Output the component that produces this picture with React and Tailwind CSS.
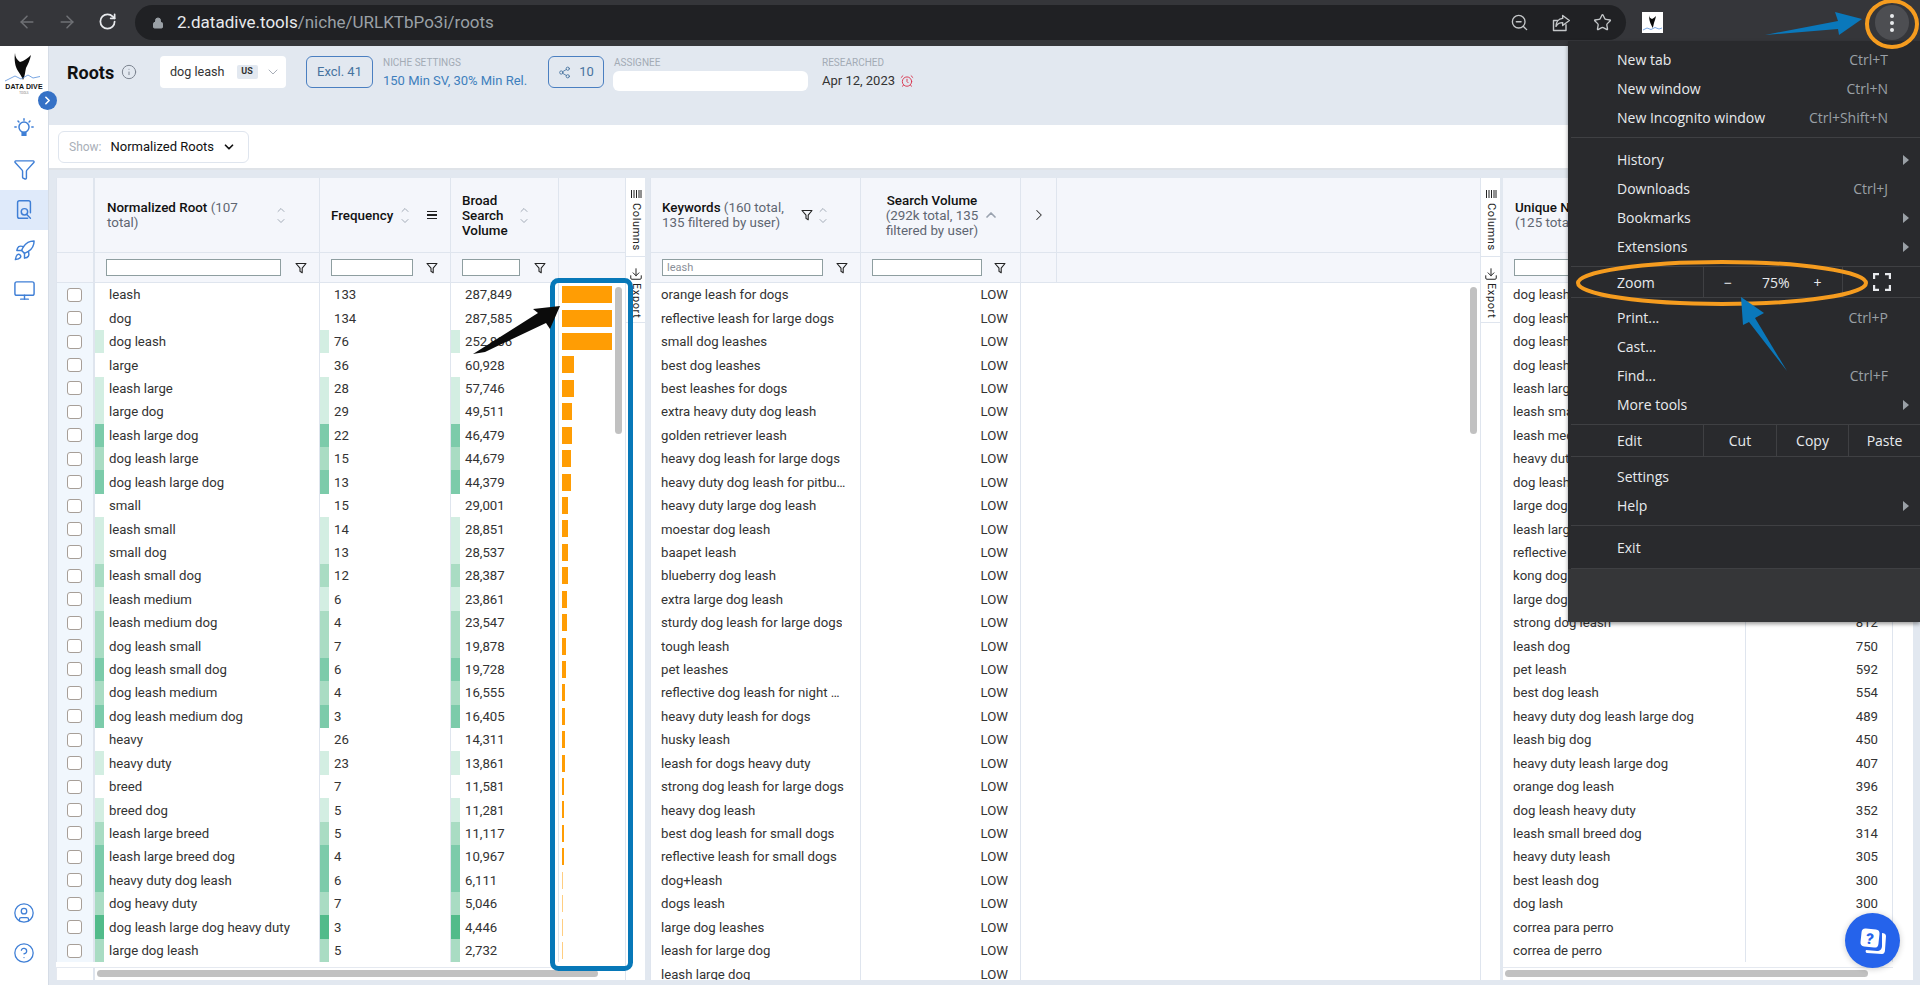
import React from "react";
import { ArrowLeft, ArrowRight, RotateCw, Lock, ZoomOut, Star, ChevronRight, ChevronDown, ChevronUp, Info, Share2, AlarmClock, Filter, Rocket, Monitor, CircleUser, CircleHelp, Download } from "lucide-react";

const roots = [
  ["leash", 133, "287,849", 0, 50], ["dog", 134, "287,585", 0, 50], ["dog leash", 76, "252,806", 1, 50],
  ["large", 36, "60,928", 0, 12], ["leash large", 28, "57,746", 1, 11.5], ["large dog", 29, "49,511", 1, 10],
  ["leash large dog", 22, "46,479", 3, 9.5], ["dog leash large", 15, "44,679", 2, 9], ["dog leash large dog", 13, "44,379", 3, 9],
  ["small", 15, "29,001", 0, 5.8], ["leash small", 14, "28,851", 1, 5.8], ["small dog", 13, "28,537", 1, 5.7],
  ["leash small dog", 12, "28,387", 2, 5.7], ["leash medium", 6, "23,861", 1, 4.8], ["leash medium dog", 4, "23,547", 2, 4.7],
  ["dog leash small", 7, "19,878", 2, 4], ["dog leash small dog", 6, "19,728", 3, 4], ["dog leash medium", 4, "16,555", 2, 3.3],
  ["dog leash medium dog", 3, "16,405", 3, 3.3], ["heavy", 26, "14,311", 0, 2.9], ["heavy duty", 23, "13,861", 1, 2.8],
  ["breed", 7, "11,581", 0, 2.3], ["breed dog", 5, "11,281", 1, 2.3], ["leash large breed", 5, "11,117", 2, 2.2],
  ["leash large breed dog", 4, "10,967", 3, 2.2], ["heavy duty dog leash", 6, "6,111", 3, 1.2], ["dog heavy duty", 7, "5,046", 2, 1],
  ["dog leash large dog heavy duty", 3, "4,446", 4, 0.9], ["large dog leash", 5, "2,732", 2, 0.6],
];
const levels = ["#ffffff", "#d3eee2", "#a9dcc3", "#7ccbaa", "#52bb8a"];

const keywords = ["orange leash for dogs","reflective leash for large dogs","small dog leashes","best dog leashes","best leashes for dogs","extra heavy duty dog leash","golden retriever leash","heavy dog leash for large dogs","heavy duty dog leash for pitbulls","heavy duty large dog leash","moestar dog leash","baapet leash","blueberry dog leash","extra large dog leash","sturdy dog leash for large dogs","tough leash","pet leashes","reflective dog leash for night walking","heavy duty leash for dogs","husky leash","leash for dogs heavy duty","strong dog leash for large dogs","heavy dog leash","best dog leash for small dogs","reflective leash for small dogs","dog+leash","dogs leash","large dog leashes","leash for large dog","leash large dog"];

const uniques = [["dog leash","40,500"],["dog leash for large dogs","9,900"],["dog leash small dog","5,400"],["dog leash large","4,400"],["leash large dog","3,600"],["leash small dog","2,900"],["leash medium dog","2,400"],["heavy duty dog leash","1,900"],["dog leash large dog","1,600"],["large dog leash","1,300"],["leash large breed","1,100"],["reflective dog leash","1,000"],["kong dog leash","950"],["large dog leash","900"],["strong dog leash","812"],["leash dog","750"],["pet leash","592"],["best dog leash","554"],["heavy duty dog leash large dog","489"],["leash big dog","450"],["heavy duty leash large dog","407"],["orange dog leash","396"],["dog leash heavy duty","352"],["leash small breed dog","314"],["heavy duty leash","305"],["best leash dog","300"],["dog lash","300"],["correa para perro","290"],["correa de perro","260"]];

const Funnel = ({ className = "" }) => (
  <svg viewBox="0 0 12 12" className={"w-[12px] h-[12px] " + className} fill="none" stroke="#222" strokeWidth="1.1">
    <path d="M1 1.5h10L7.2 6.2v4.6L5 9.4V6.2z" strokeLinejoin="round" />
  </svg>
);

const Sort = ({ className = "" }) => (
  <span className={"flex flex-col items-center text-[#9aa3af] " + className}>
    <ChevronUp size={12} strokeWidth={1.8} className="-mb-[1px]" />
    <ChevronDown size={12} strokeWidth={1.8} />
  </span>
);

const FilterBox = ({ w, value }) => (
  <div className={"h-[17px] bg-white border border-[#8e9ea0] flex items-center pl-[4px] text-[11px] text-[#8a8f98] " + w}>{value}</div>
);

const Rail = () => (
  <div className="w-[20px] shrink-0 flex flex-col bg-white border-l border-[#dfe5ee]">
    <div className="h-[79px] border-b border-[#dfe5ee] flex flex-col items-center pt-[11px] gap-[4px]">
      <svg viewBox="0 0 12 10" className="w-[12px] h-[10px]" stroke="#222" strokeWidth="1"><path d="M1.5 1v8M4 1v8M6.5 1v8M9 1v8M11 1v8" /></svg>
      <span className="[writing-mode:vertical-rl] text-[11px] leading-[20px] text-[#222] tracking-[0.6px]">Columns</span>
    </div>
    <div className="h-[66px] border-b border-[#dfe5ee] flex flex-col items-center pt-[10px] gap-[2px]">
      <Download size={14} strokeWidth={1.7} className="text-[#222]" />
      <span className="[writing-mode:vertical-rl] text-[11px] leading-[20px] text-[#222] tracking-[0.6px]">Export</span>
    </div>
  </div>
);

const HeadCell = ({ w, children, className = "" }) => (
  <div className={"h-full shrink-0 border-r border-[#dfe5ee] flex items-center text-[13.4px] leading-[15px] " + w + " " + className}>{children}</div>
);

const Scroll = ({ className }) => <div className={"absolute rounded-full bg-[#c1c1c1] " + className}></div>;

function RootsTable() {
  return (
    <div className="relative w-[589px] shrink-0 flex bg-white">
      <div className="w-[569px] flex flex-col">
        <div className="h-[75px] flex bg-[#f4f6fb] border-b border-[#dfe5ee] border-l">
          <HeadCell w="w-[38px] border-r-2"></HeadCell>
          <HeadCell w="w-[225px]" className="pl-[12px]">
            <div className="w-[140px] font-medium text-[#111]">Normalized Root <span className="text-[#5f6672] font-normal">(107 total)</span></div>
            <Sort className="ml-[28px]" />
          </HeadCell>
          <HeadCell w="w-[131px]" className="pl-[11px]">
            <span className="font-medium text-[#111]">Frequency</span>
            <Sort className="ml-[6px]" />
            <div className="ml-[16px] flex flex-col gap-[2px]"><i className="block w-[10px] h-[1.5px] bg-[#222]"></i><i className="block w-[10px] h-[1.5px] bg-[#222]"></i><i className="block w-[10px] h-[1.5px] bg-[#222]"></i></div>
          </HeadCell>
          <HeadCell w="w-[108px]" className="pl-[11px]">
            <div className="w-[50px] font-medium text-[#111]">Broad Search Volume</div>
            <Sort className="ml-[6px]" />
          </HeadCell>
          <div className="flex-1"></div>
        </div>
        <div className="h-[30px] flex bg-[#f4f6fb] border-b border-[#dfe5ee] border-l">
          <HeadCell w="w-[38px] border-r-2"></HeadCell>
          <HeadCell w="w-[225px]" className="pl-[11px] gap-[14px]"><FilterBox w="w-[175px]" /><Funnel /></HeadCell>
          <HeadCell w="w-[131px]" className="pl-[11px] gap-[13px]"><FilterBox w="w-[82px]" /><Funnel /></HeadCell>
          <HeadCell w="w-[108px]" className="pl-[11px] gap-[14px]"><FilterBox w="w-[58px]" /><Funnel /></HeadCell>
          <div className="flex-1"></div>
        </div>
        <div className="h-[684px] overflow-hidden">
          {roots.map(([n, f, v, l, b], i) => (
            <div key={i} className="h-[23.43px] flex text-[13.2px] text-[#333] border-l border-[#dfe5ee]">
              <div className="w-[38px] shrink-0 bg-[#f1f7fd] border-r-2 border-[#dfe5ee] flex items-center pl-[10px]">
                <span className="block w-[15px] h-[14px] bg-white border border-[#a79f98] rounded-[3px]"></span>
              </div>
              <div className="w-[225px] shrink-0 flex items-center border-r border-[#dfe5ee]">
                <span className="w-[9px] h-full shrink-0" style={{ background: levels[l] }}></span>
                <span className="pl-[5px] pt-[1px]">{n}</span>
              </div>
              <div className="w-[131px] shrink-0 flex items-center border-r border-[#dfe5ee]">
                <span className="w-[9px] h-full shrink-0" style={{ background: levels[l] }}></span>
                <span className="pl-[5px] pt-[1px]">{f}</span>
              </div>
              <div className="w-[108px] shrink-0 flex items-center border-r border-[#dfe5ee]">
                <span className="w-[9px] h-full shrink-0" style={{ background: levels[l] }}></span>
                <span className="pl-[5px] pt-[1px]">{v}</span>
              </div>
              <div className="flex-1 flex items-center pl-[3px]">
                <span className="block h-[17px] bg-[#ff9d04]" style={{ width: b + "px", opacity: b < 2 ? 0.5 : 1 }}></span>
              </div>
            </div>
          ))}
        </div>
        <div className="flex-1 border-t border-[#e5e9f0] flex border-l">
          <div className="w-[38px] border-r-2 border-[#dfe5ee]"></div>
        </div>
      </div>
      <Rail />
      <Scroll className="left-[559px] top-[109px] w-[7px] h-[147px]" />
      <Scroll className="left-[41px] top-[792px] w-[501px] h-[7px]" />
    </div>
  );
}

function KeywordsTable() {
  return (
    <div className="relative w-[850px] shrink-0 flex bg-white">
      <div className="w-[830px] flex flex-col">
        <div className="h-[75px] flex bg-[#f4f6fb] border-b border-[#dfe5ee] border-l">
          <HeadCell w="w-[210px]" className="pl-[11px]">
            <div className="w-[137px] font-medium text-[#111]">Keywords <span className="text-[#5f6672] font-normal">(160 total, 135 filtered by user)</span></div>
            <Funnel className="ml-[2px]" />
            <Sort className="ml-[4px]" />
          </HeadCell>
          <HeadCell w="w-[160px]" className="pl-[18px]">
            <div className="w-[106px] text-center text-[#5f6672]"><span className="font-medium text-[#111] whitespace-nowrap">Search Volume</span> (292k total, 135 filtered by user)</div>
            <ChevronUp size={16} strokeWidth={2.6} className="-ml-[2px] text-[#9aa3af]" />
          </HeadCell>
          <HeadCell w="w-[36px]" className="pl-[9px]"><ChevronRight size={18} strokeWidth={1.4} className="text-[#333]" /></HeadCell>
          <div className="flex-1"></div>
        </div>
        <div className="h-[30px] flex bg-[#f4f6fb] border-b border-[#dfe5ee] border-l">
          <HeadCell w="w-[210px]" className="pl-[11px] gap-[13px]"><FilterBox w="w-[161px]" value="leash" /><Funnel /></HeadCell>
          <HeadCell w="w-[160px]" className="pl-[11px] gap-[12px]"><FilterBox w="w-[110px]" /><Funnel /></HeadCell>
          <HeadCell w="w-[36px]"></HeadCell>
          <div className="flex-1"></div>
        </div>
        <div className="flex-1 overflow-hidden">
          {keywords.map((k, i) => (
            <div key={i} className="h-[23.43px] flex text-[13.2px] text-[#333] border-l border-[#dfe5ee]">
              <div className="w-[210px] shrink-0 flex items-center pl-[10px] pr-[13px] pt-[1px] border-r border-[#dfe5ee]"><span className="truncate">{k}</span></div>
              <div className="w-[160px] shrink-0 flex items-center justify-end pr-[12px] pt-[1px] border-r border-[#dfe5ee]">LOW</div>
            </div>
          ))}
        </div>
      </div>
      <Rail />
      <Scroll className="left-[820px] top-[109px] w-[7px] h-[147px]" />
    </div>
  );
}

function UniqueTable() {
  return (
    <div className="relative w-[410px] shrink-0 flex bg-white">
      <div className="w-[390px] flex flex-col">
        <div className="h-[75px] flex bg-[#f4f6fb] border-b border-[#dfe5ee]">
          <HeadCell w="w-[243px]" className="pl-[12px]">
            <div className="font-medium text-[#111]">Unique Normalized Keywords <br /><span className="text-[#5f6672] font-normal">(125 total)</span></div>
          </HeadCell>
          <HeadCell w="w-[147px]"></HeadCell>
        </div>
        <div className="h-[30px] flex bg-[#f4f6fb] border-b border-[#dfe5ee]">
          <HeadCell w="w-[243px]" className="pl-[11px]"><FilterBox w="w-[190px]" /></HeadCell>
          <HeadCell w="w-[147px]"></HeadCell>
        </div>
        <div className="h-[684px] overflow-hidden">
          {uniques.map(([n, v], i) => (
            <div key={i} className="h-[23.43px] flex text-[13.2px] text-[#333]">
              <div className="w-[243px] shrink-0 flex items-center pl-[10px] pt-[1px] border-r border-[#dfe5ee]">{n}</div>
              <div className="w-[147px] shrink-0 flex items-center justify-end pr-[14px] pt-[1px] border-r border-[#dfe5ee]">{v}</div>
            </div>
          ))}
        </div>
        <div className="flex-1 border-t border-[#e5e9f0]"></div>
      </div>
      <div className="w-[20px] shrink-0 bg-white"></div>
      <Scroll className="left-[2px] top-[792px] w-[363px] h-[7px]" />
    </div>
  );
}

const Tri = () => <span className="w-0 h-0 border-y-[5px] border-y-transparent border-l-[6px] border-l-[#9aa0a6]"></span>;

const MenuRow = ({ label, hint, arrow }) => (
  <div className="h-[29px] flex items-center pl-[49px] pr-[32px] pb-[1.5px] relative">
    <span className="text-[#e8eaed]">{label}</span>
    {hint && <span className="ml-auto text-[#9aa0a6]">{hint}</span>}
    {arrow && <span className="absolute right-[11px] top-[9px] flex"><Tri /></span>}
  </div>
);
const Sep = () => <div className="h-px bg-[#3f4043] ml-[3px]"></div>;

function ChromeMenu() {
  return (
    <div className="absolute left-[1568px] top-[41px] w-[352px] h-[581px] bg-[#292a2d] flex flex-col text-[14px] font-['Open_Sans',sans-serif] shadow-[0_2px_4px_rgba(0,0,0,0.4)]">
      <div className="h-[4.5px]"></div>
      <MenuRow label="New tab" hint="Ctrl+T" />
      <MenuRow label="New window" hint="Ctrl+N" />
      <MenuRow label="New Incognito window" hint="Ctrl+Shift+N" />
      <div className="h-[4px]"></div>
      <Sep />
      <div className="h-[8px]"></div>
      <MenuRow label="History" arrow />
      <MenuRow label="Downloads" hint="Ctrl+J" />
      <MenuRow label="Bookmarks" arrow />
      <MenuRow label="Extensions" arrow />
      <div className="h-[4.5px]"></div>
      <Sep />
      <div className="h-[30px] flex items-center text-[#e8eaed]">
        <span className="w-[135px] pl-[49px]">Zoom</span>
        <div className="w-[140px] h-full border-x border-[#3f4043] flex items-center relative">
          <span className="ml-[20px]">−</span>
          <span className="ml-[30px]">75%</span>
          <span className="ml-[24px]">+</span>
        </div>
        <svg viewBox="0 0 18 18" className="w-[18px] h-[18px] ml-[30px]" fill="none" stroke="#e8eaed" strokeWidth="2.4"><path d="M1 6V1h5M12 1h5v5M17 12v5h-5M6 17H1v-5" /></svg>
      </div>
      <Sep />
      <div className="h-[6px]"></div>
      <MenuRow label="Print..." hint="Ctrl+P" />
      <MenuRow label="Cast..." />
      <MenuRow label="Find..." hint="Ctrl+F" />
      <MenuRow label="More tools" arrow />
      <div className="h-[4px]"></div>
      <Sep />
      <div className="h-[31px] flex items-center text-[#e8eaed]">
        <span className="w-[135px] pl-[49px]">Edit</span>
        <span className="w-[73px] h-full border-l border-[#3f4043] flex items-center justify-center">Cut</span>
        <span className="w-[72px] h-full border-l border-[#3f4043] flex items-center justify-center">Copy</span>
        <span className="w-[72px] h-full border-l border-[#3f4043] flex items-center justify-center">Paste</span>
      </div>
      <Sep />
      <div className="h-[6px]"></div>
      <MenuRow label="Settings" />
      <MenuRow label="Help" arrow />
      <div className="h-[4px]"></div>
      <Sep />
      <div className="h-[8px]"></div>
      <MenuRow label="Exit" />
      <div className="h-[5px]"></div>
      <Sep />
      <div className="flex-1 bg-[#353638]"></div>
    </div>
  );
}

function Sidebar() {
  const c = "text-[#3f7fd6]";
  return (
    <div className="relative w-[49px] shrink-0 bg-white border-r border-[#d5dce6] flex flex-col items-center">
      <div className="h-[50px] w-full relative flex flex-col items-center pt-[4px]">
        <svg viewBox="0 0 48 36" className="w-[48px] h-[36px]">
          <path d="M15 3c0 4 2 7 5 9 4-1 8-4 11-7-1 5-3 9-5 13-1 4-1 8-3 12-1-3-3-6-5-9-3-4-4-12-3-18z" fill="#0b0b0b" />
          <path d="M5 31l10-5 6 3 7-4 5 3 7-1.500" fill="none" stroke="#3f7fd6" strokeWidth="0.7" />
        </svg>
        <span className="-mt-[3px] text-[7px] leading-[8px] font-bold text-[#111] font-['Liberation_Sans',sans-serif] tracking-[0.1px]">DATA DIVE</span>
        <span className="text-[3px] leading-[4px] text-[#777]">TOOLS</span>
      </div>
      <div className="absolute left-[38px] top-[45px] w-[19px] h-[19px] rounded-full bg-[#3571c6] flex items-center justify-center z-10">
        <ChevronRight size={13} strokeWidth={3} className="text-white" />
      </div>
      <div className="h-[63px] w-full flex items-center justify-center">
        <svg viewBox="0 0 24 24" className={"w-[22px] h-[22px] " + c} fill="none" stroke="currentColor" strokeWidth="1.6" strokeLinecap="round">
          <circle cx="12" cy="11" r="5.5" /><path d="M10 17h4v3h-4z" fill="currentColor" /><path d="M12 2v1.5M3.5 11H2M22 11h-1.500M5.500 4.500l1 1M18.500 4.500l-1 1" />
        </svg>
      </div>
      <div className="h-[20px] w-full flex items-center justify-center">
        <Filter size={23} strokeWidth={1.5} className={c} />
      </div>
      <div className="h-[40px] mt-[11px] w-full bg-[#dfeafa] flex items-center justify-center">
        <svg viewBox="0 0 24 24" className={"w-[22px] h-[24px] " + c} fill="none" stroke="currentColor" strokeWidth="1.6" strokeLinecap="round">
          <path d="M16 21H7a2 2 0 0 1-2-2V4a2 2 0 0 1 2-2h10a2 2 0 0 1 2 2v11" /><circle cx="12.5" cy="14" r="3.5" /><path d="M15 17l4 4" />
        </svg>
      </div>
      <div className="h-[40px] w-full flex items-center justify-center">
        <Rocket size={23} strokeWidth={1.5} className={c} />
      </div>
      <div className="h-[40px] w-full flex items-center justify-center">
        <Monitor size={23} strokeWidth={1.5} className={c} />
      </div>
      <div className="mt-auto mb-[21px] flex flex-col gap-[18px]">
        <CircleUser size={22} strokeWidth={1.4} className={c} />
        <CircleHelp size={22} strokeWidth={1.4} className={c} />
      </div>
    </div>
  );
}

function ChromeBar() {
  return (
    <div className="h-[46px] bg-[#35363a] flex items-start shrink-0 relative">
      <ArrowLeft size={20} strokeWidth={1.8} className="absolute left-[17px] top-[12px] text-[#6f7175]" />
      <ArrowRight size={20} strokeWidth={1.8} className="absolute left-[57px] top-[12px] text-[#6f7175]" />
      <RotateCw size={19} strokeWidth={2.2} className="absolute left-[98px] top-[12px] text-[#e8eaed]" />
      <div className="ml-[135px] mt-[5px] w-[1491px] h-[35px] rounded-full bg-[#202124] flex items-center pl-[17px]">
        <Lock size={12} fill="#9aa0a6" strokeWidth={2} className="text-[#9aa0a6]" />
        <span className="ml-[13px] text-[17px] font-['Roboto',sans-serif] text-[#e8eaed]">2.datadive.tools<span className="text-[#9aa0a6]">/niche/URLKTbPo3i/roots</span></span>
        <div className="ml-auto flex items-center gap-[22px] pr-[14px] text-[#c4c7c9]">
          <ZoomOut size={19} strokeWidth={1.7} />
          <svg viewBox="0 0 24 24" className="w-[20px] h-[20px]" fill="none" stroke="currentColor" strokeWidth="1.700" strokeLinejoin="round" strokeLinecap="round">
            <path d="M18 14v7H3V9h5" /><path d="M14 3l8 6-8 6v-3.500c-4 0-6.500 1.500-8 4.500 0-5 3-9 8-9.500z" />
          </svg>
          <Star size={19} strokeWidth={1.7} />
        </div>
      </div>
      <div className="ml-[16px] mt-[12px] w-[21px] h-[21px] bg-white flex items-center justify-center">
        <svg viewBox="0 0 21 21" className="w-[21px] h-[21px]"><path d="M7 3c0 2 1 3 3 4 2-1 3-2 4-3-.5 3-1.500 5-2 7-.5 2-.5 3-1.500 5-.5-2-2-4-2.500-6-.7-2-1-5-1-7z" fill="#0b0b0b" /><path d="M1 18l4-2 4 1.500 4-2 4 1.500 3-1" fill="none" stroke="#3f7fd6" strokeWidth="0.7" /></svg>
      </div>
      <div className="absolute left-[1875px] top-[5px] w-[34px] h-[35px] rounded-full bg-[#4d4e52] flex flex-col items-center justify-center gap-[3px]">
        <i className="block w-[4px] h-[4px] rounded-full bg-[#e8eaed]"></i>
        <i className="block w-[4px] h-[4px] rounded-full bg-[#e8eaed]"></i>
        <i className="block w-[4px] h-[4px] rounded-full bg-[#e8eaed]"></i>
      </div>
    </div>
  );
}

function TopHeader() {
  const label = "text-[10px] leading-[12px] text-[#a3abb5] uppercase";
  return (
    <div className="h-[79px] bg-[#e2e8f0] flex items-start pt-[10px] pl-[18px] shrink-0">
      <div className="flex items-center h-[32px] w-[93px]">
        <span className="text-[18px] font-bold text-[#111]">Roots</span>
        <Info size={16} strokeWidth={1.5} className="ml-[7px] text-[#7c8490]" />
      </div>
      <div className="w-[126px] h-[32px] bg-white rounded-[4px] flex items-center pl-[10px] text-[12.6px] text-[#333]">
        dog leash
        <span className="ml-[12px] w-[21px] h-[14px] bg-[#e2e8f0] rounded-[2px] text-[9px] font-bold text-[#333] flex items-center justify-center">US</span>
        <ChevronDown size={16} strokeWidth={1.5} className="ml-[7px] text-[#a8aeb8]" />
      </div>
      <div className="ml-[20px] w-[67px] h-[32px] border border-[#4a7fc1] rounded-[6px] flex items-center justify-center text-[13px] text-[#47739f]">Excl. 41</div>
      <div className="ml-[10px] w-[165px]">
        <div className={label + " mt-[1px]"}>Niche Settings</div>
        <div className="mt-[3px] text-[13px] leading-[18px] text-[#3e7fbd] whitespace-nowrap">150 Min SV, 30% Min Rel.</div>
      </div>
      <div className="w-[56px] h-[32px] border border-[#4a7fc1] rounded-[6px] flex items-center justify-center gap-[8px] text-[13px] text-[#47739f]">
        <Share2 size={13} strokeWidth={1.6} />10
      </div>
      <div className="ml-[9px] w-[209px]">
        <div className={label + " mt-[1px] ml-[1px]"}>Assignee</div>
        <div className="mt-[2px] w-[195px] h-[20px] bg-white rounded-[6px]"></div>
      </div>
      <div>
        <div className={label + " mt-[1px]"}>Researched</div>
        <div className="mt-[3px] flex items-center text-[13px] leading-[18px] text-[#333]">Apr 12, 2023<AlarmClock size={14} strokeWidth={1.6} className="ml-[5px] text-[#d8344e]" /></div>
      </div>
    </div>
  );
}

const Annotations = () => (
  <svg viewBox="0 0 1920 985" className="absolute inset-0 w-[1920px] h-[985px] pointer-events-none">
    <rect x="552.5" y="280.5" width="78" height="688" rx="6" fill="none" stroke="#0778b8" strokeWidth="5" />
    <polygon points="473,354 538,313 533,309 560,306 550,329 546,323 485,352" fill="#0b0b0b" />
    <ellipse cx="1892" cy="24" rx="25" ry="23" fill="none" stroke="#f59c1f" strokeWidth="4" />
    <ellipse cx="1722" cy="283" rx="144" ry="21" fill="none" stroke="#f59c1f" strokeWidth="4" />
    <polygon points="1765,35 1838,21 1835,12 1862,19 1839,35 1838,29" fill="#0a78bb" />
    <polygon points="1741,297 1764,313 1755,318 1787,371 1749,322 1743,325" fill="#0a78bb" />
  </svg>
);

export default function App() {
  return (
    <div className="relative w-[1920px] h-[985px] overflow-hidden flex flex-col bg-white font-['Roboto',sans-serif]">
      <ChromeBar />
      <div className="flex flex-1 min-h-0">
        <Sidebar />
        <div className="flex-1 flex flex-col min-w-0">
          <TopHeader />
          <div className="h-[45px] bg-white border-b-2 border-[#dfe3e8] flex items-center pl-[9px] shrink-0">
            <div className="w-[191px] h-[32px] border border-[#dfe5ee] rounded-[6px] flex items-center pl-[10px] text-[13px] text-[#111]">
              <span className="text-[#a9afb8] text-[12px] mr-[9px]">Show:</span>Normalized Roots
              <ChevronDown size={14} strokeWidth={3} className="ml-[8px] text-[#111]" />
            </div>
          </div>
          <div className="flex-1 bg-[#e2e8f0] flex pl-[7px] pt-[8px] pb-[5px] min-h-0 gap-[5px]">
            <RootsTable />
            <KeywordsTable />
            <div className="-ml-[2px]"><div className="h-full flex"><UniqueTable /></div></div>
          </div>
        </div>
      </div>
      <ChromeMenu />
      <Annotations />
      <div className="absolute left-[1845px] top-[913px] w-[55px] h-[55px] rounded-full bg-[#2563eb] flex items-center justify-center shadow-[0_1px_6px_rgba(0,0,0,0.2)]">
        <svg viewBox="0 0 32 32" className="w-[32px] h-[32px]">
          <path d="M25 8c2 0 4 1 4 3l-1 14c0 2-1 4-3 4l-15-1c-1 0-2-2-1-3l11 1c3 0 5-2 5-5z" fill="#fff" />
          <rect x="4" y="4" width="18" height="18" rx="4" fill="#fff" transform="rotate(6 13 13)" />
          <text x="13" y="19" fontSize="15" fontWeight="900" textAnchor="middle" fill="#2563eb" fontFamily="Roboto" transform="rotate(8 13 13)">?</text>
        </svg>
      </div>
    </div>
  );
}
